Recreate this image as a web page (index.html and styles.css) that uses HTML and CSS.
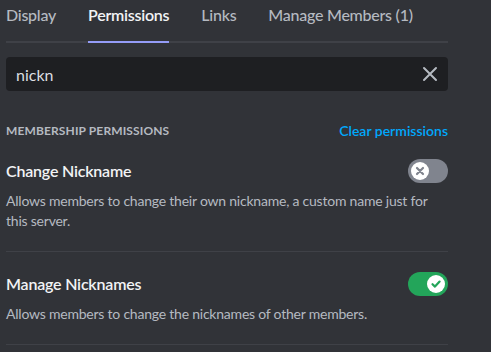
FILE: index.html
```html
<!DOCTYPE html>
<html>
<head>
<meta charset="utf-8">
<link rel="stylesheet" href="styles.css">
</head>
<body>
<div class="page">
  <div class="tabs">
    <div class="tab">Display</div>
    <div class="tab active">Permissions</div>
    <div class="tab">Links</div>
    <div class="tab">Manage Members (1)</div>
  </div>
  <div class="search">
    <span class="query">nickn</span>
    <svg class="clear" width="16" height="16" viewBox="0 0 16 16"><path d="M2 2L14 14M14 2L2 14" stroke="#b5bac1" stroke-width="2" stroke-linecap="round"/></svg>
  </div>
  <div class="section-head">
    <span class="section-title">Membership Permissions</span>
    <span class="clear-link">Clear permissions</span>
  </div>
  <div class="perm">
    <div class="perm-head">
      <span class="perm-title">Change Nickname</span>
      <div class="toggle off">
        <div class="knob">
          <svg width="12" height="12" viewBox="0 0 12 12"><path d="M3 3L9 9M9 3L3 9" stroke="#80848e" stroke-width="2.2" stroke-linecap="round"/></svg>
        </div>
      </div>
    </div>
    <div class="perm-desc">Allows members to change their own nickname, a custom name just for this server.</div>
  </div>
  <div class="perm">
    <div class="perm-head">
      <span class="perm-title">Manage Nicknames</span>
      <div class="toggle on">
        <div class="knob">
          <svg width="12" height="12" viewBox="0 0 12 12"><path d="M2.5 6.2L5 8.6L9.6 3.6" stroke="#23a55a" stroke-width="2.2" fill="none" stroke-linecap="round" stroke-linejoin="round"/></svg>
        </div>
      </div>
    </div>
    <div class="perm-desc">Allows members to change the nicknames of other members.</div>
  </div>
</div>
</body>
</html>
```
FILE: styles.css
```css
html, body {
  margin: 0;
  padding: 0;
  background: #313338;
  font-family: "Lato", "Noto Sans", sans-serif;
}
.page {
  width: 442px;
  padding: 0 6px;
}
.tabs {
  display: flex;
  gap: 32px;
  border-bottom: 2px solid #3f4147;
  white-space: nowrap;
}
.tab {
  padding-top: 5px;
  padding-bottom: 16px;
  line-height: 20px;
  font-size: 16px;
  font-weight: 500;
  letter-spacing: -0.25px;
  color: #b5bac1;
  margin-bottom: -2px;
  border-bottom: 2px solid transparent;
}
.tab.active {
  color: #f2f3f5;
  font-weight: 600;
  border-bottom-color: #949cf7;
}
.search {
  margin-top: 14px;
  height: 34px;
  background: #1e1f22;
  border-radius: 4px;
  display: flex;
  align-items: center;
  padding: 0 10px;
}
.query {
  flex: 1;
  font-size: 16px;
  color: #dbdee1;
}
.section-head {
  margin-top: 32px;
  display: flex;
  justify-content: space-between;
  align-items: center;
  line-height: 16px;
}
.section-title {
  font-size: 12px;
  font-weight: 700;
  text-transform: uppercase;
  color: #b5bac1;
  letter-spacing: 0.01em;
}
.clear-link {
  font-size: 14px;
  font-weight: 600;
  color: #00a8fc;
}
.perm {
  padding: 20px 0;
  border-bottom: 1px solid #3f4147;
}
.perm-head {
  display: flex;
  justify-content: space-between;
  align-items: center;
  height: 24px;
}
.perm-title {
  font-size: 16px;
  font-weight: 600;
  color: #f2f3f5;
  line-height: 20px;
  letter-spacing: -0.2px;
}
.perm-desc {
  margin-top: 8px;
  font-size: 14px;
  line-height: 20px;
  letter-spacing: -0.22px;
  color: #b5bac1;
}
.toggle {
  width: 40px;
  height: 24px;
  border-radius: 12px;
  display: flex;
  align-items: center;
  padding: 0 3px;
  box-sizing: border-box;
}
.toggle.off {
  background: #80848e;
  justify-content: flex-start;
}
.toggle.on {
  background: #23a55a;
  justify-content: flex-end;
}
.knob {
  width: 18px;
  height: 18px;
  border-radius: 50%;
  background: #ffffff;
  display: flex;
  align-items: center;
  justify-content: center;
}
```
